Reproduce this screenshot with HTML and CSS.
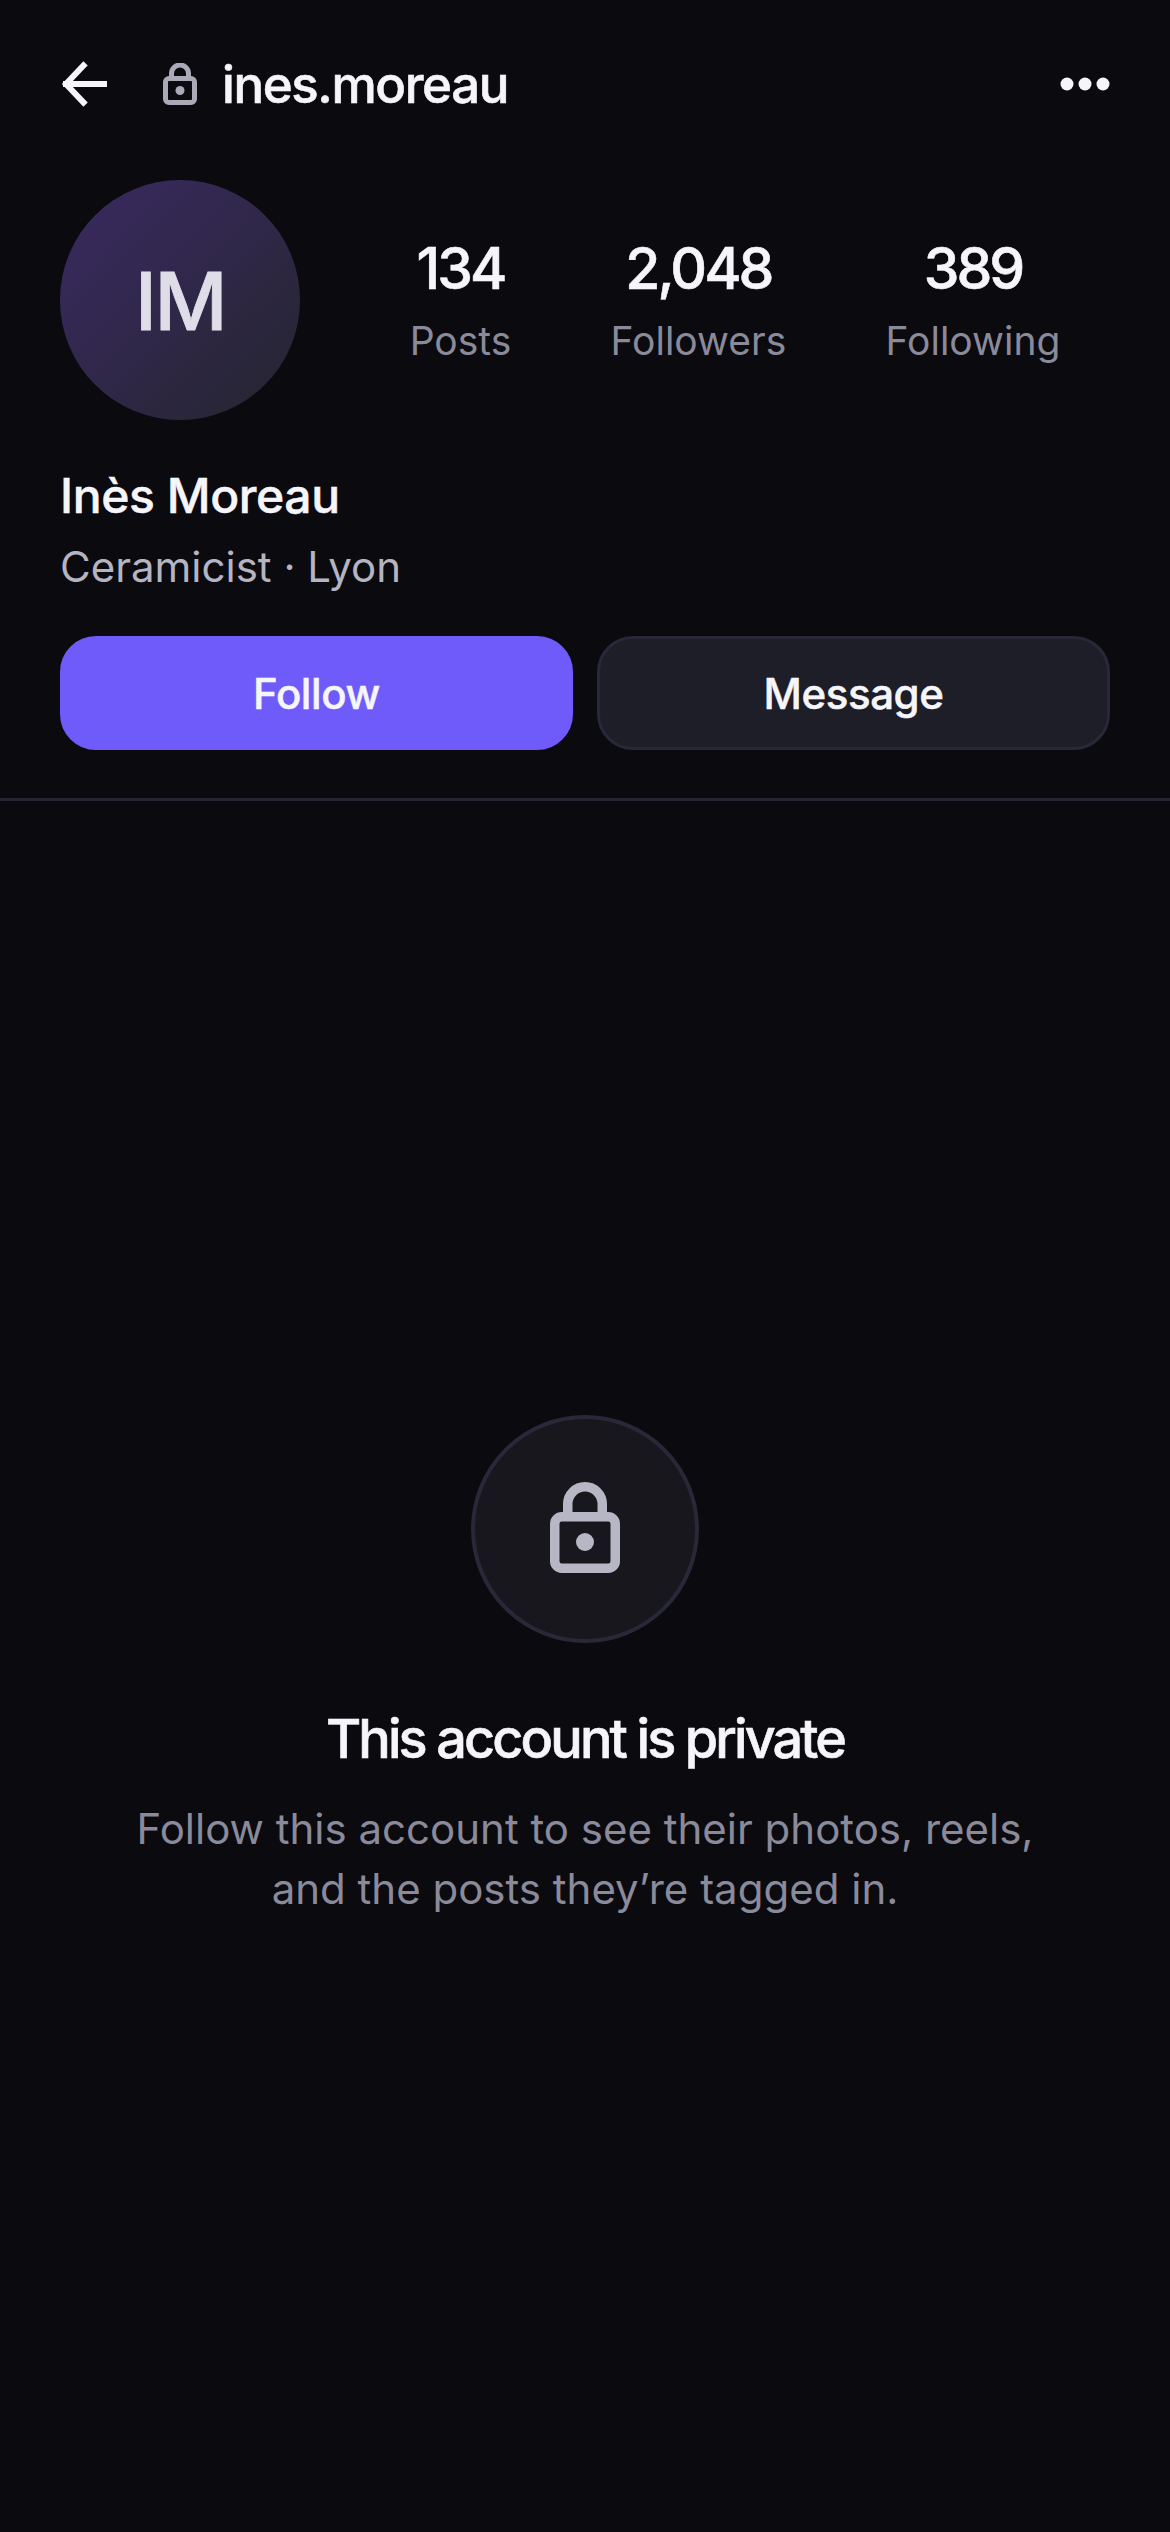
FILE: index.html
```html
<!DOCTYPE html>
<html lang="en">
<head>
    <meta charset="UTF-8">
    <meta name="viewport" content="width=device-width, initial-scale=1.0">
    <title>ines.moreau</title>
    <link rel="stylesheet" href="styles.css">
</head>
<body>
    <header class="topbar">
        <svg class="back-icon" width="48" height="48" viewBox="0 0 48 48" fill="none" stroke="#f5f5fa" stroke-width="6" stroke-linecap="square" stroke-linejoin="miter">
            <path d="M44 24H6"/>
            <path d="M23.5 5.5L6 24L23.5 42.5"/>
        </svg>
        <svg class="small-lock" width="36" height="42" viewBox="0 0 36 42" fill="none" stroke="#a9a9b8" stroke-width="5">
            <rect x="3.5" y="15.5" width="29" height="24" rx="3.5"/>
            <path d="M9.5 15.5V10.5a8.5 8.5 0 0 1 17 0V15.5"/>
            <circle cx="18" cy="27.5" r="4.5" fill="#a9a9b8" stroke="none"/>
        </svg>
        <h1 class="username">ines.moreau</h1>
        <svg class="more-icon" width="50" height="14" viewBox="0 0 50 14" fill="#f5f5fa">
            <circle cx="7" cy="7" r="6.5"/>
            <circle cx="25" cy="7" r="6.5"/>
            <circle cx="43" cy="7" r="6.5"/>
        </svg>
    </header>

    <section class="profile">
        <div class="profile-top">
            <div class="avatar">IM</div>
            <div class="stats">
                <div class="stat">
                    <div class="stat-num">134</div>
                    <div class="stat-label">Posts</div>
                </div>
                <div class="stat">
                    <div class="stat-num">2,048</div>
                    <div class="stat-label">Followers</div>
                </div>
                <div class="stat">
                    <div class="stat-num">389</div>
                    <div class="stat-label">Following</div>
                </div>
            </div>
        </div>
        <div class="name">Inès Moreau</div>
        <div class="bio">Ceramicist · Lyon</div>
        <div class="actions">
            <button class="btn btn-follow">Follow</button>
            <button class="btn btn-message">Message</button>
        </div>
    </section>

    <main class="private">
        <div class="lock-circle">
            <svg class="big-lock" width="70" height="91" viewBox="0 0 70 91" fill="none" stroke="#b6b6c4" stroke-width="9.5">
                <rect x="4.75" y="34.75" width="60.5" height="51.5" rx="7"/>
                <path d="M17.75 35V22a17.25 17.25 0 0 1 34.5 0V35"/>
                <circle cx="35" cy="60" r="9" fill="#b6b6c4" stroke="none"/>
            </svg>
        </div>
        <h2 class="private-title">This account is private</h2>
        <p class="private-text">Follow this account to see their photos, reels,<br>and the posts they’re tagged in.</p>
    </main>
</body>
</html>
```
FILE: styles.css
```css
html, body {
    height: 100%;
}
body {
    margin: 0;
    display: flex;
    flex-direction: column;
    background-color: #0a0a0f;
    color: #f5f5fa;
    font-family: Inter, "Liberation Sans", sans-serif;
}
.topbar {
    display: flex;
    align-items: center;
    height: 168px;
    padding: 0 60px;
    box-sizing: border-box;
}
.back-icon {
    margin-right: 54px;
}
.small-lock {
    margin-right: 24px;
}
.username {
    flex: 1;
    margin: 0;
    font-size: 51px;
    font-weight: 500;
    letter-spacing: -1.4px;
    -webkit-text-stroke: 0.6px #f5f5fa;
}
.profile {
    padding: 12px 60px 48px;
    border-bottom: 3px solid #262633;
}
.profile-top {
    display: flex;
    align-items: center;
    gap: 60px;
}
.avatar {
    width: 240px;
    height: 240px;
    flex: none;
    display: flex;
    align-items: center;
    justify-content: center;
    border-radius: 50%;
    background: linear-gradient(135deg, #3a2a63, #25252e);
    color: #dfdee8;
    font-size: 80px;
    font-weight: 500;
    letter-spacing: -2.5px;
    -webkit-text-stroke: 0.8px #dfdee8;
}
.stats {
    flex: 1;
    display: flex;
    justify-content: space-around;
    padding-bottom: 3px;
}
.stat {
    text-align: center;
}
.stat-num {
    font-size: 57px;
    font-weight: 500;
    line-height: 72px;
    letter-spacing: -2.95px;
    -webkit-text-stroke: 0.6px #f5f5fa;
}
.stat-label {
    margin-top: 12px;
    color: #8a8a9a;
    font-size: 39px;
    line-height: 48px;
}
.name {
    margin-top: 46px;
    font-size: 48px;
    font-weight: 500;
    line-height: 60px;
    letter-spacing: -0.4px;
    -webkit-text-stroke: 0.5px #f5f5fa;
}
.bio {
    margin-top: 11px;
    color: #b4b4c2;
    font-size: 42px;
    line-height: 60px;
}
.actions {
    display: flex;
    gap: 24px;
    margin-top: 39px;
}
.btn {
    flex: 1;
    height: 114px;
    border-radius: 36px;
    border: 3px solid transparent;
    color: #f5f5fa;
    font-family: inherit;
    font-size: 42px;
    font-weight: 500;
    letter-spacing: -0.4px;
    -webkit-text-stroke: 0.5px #f5f5fa;
}
.btn-follow {
    background-color: #6f5bfa;
    border-color: #6f5bfa;
}
.btn-message {
    background-color: #1e1e28;
    border-color: #282838;
}
.private {
    flex: 1;
    display: flex;
    flex-direction: column;
    align-items: center;
    justify-content: center;
}
.lock-circle {
    width: 228px;
    height: 228px;
    box-sizing: border-box;
    display: flex;
    align-items: center;
    justify-content: center;
    border: 4px solid #282838;
    border-radius: 50%;
    background-color: #17171d;
}
.big-lock {
    margin-bottom: 3px;
}
.private-title {
    margin: 60px 0 0;
    font-size: 54px;
    font-weight: 500;
    line-height: 72px;
    letter-spacing: -2.9px;
    -webkit-text-stroke: 0.6px #f5f5fa;
}
.private-text {
    margin: 24px 0 0;
    color: #8a8a9a;
    font-size: 42px;
    line-height: 60px;
    text-align: center;
}
```
